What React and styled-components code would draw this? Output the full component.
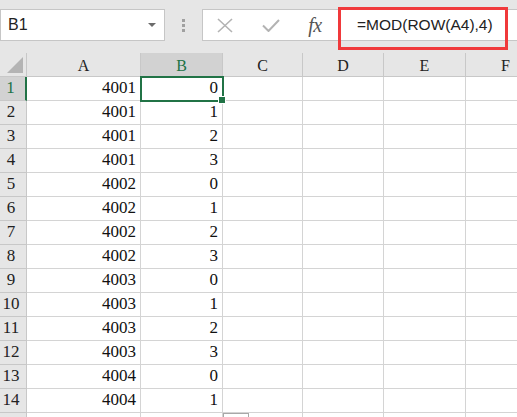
import React from 'react'
import styled, { createGlobalStyle } from 'styled-components'

const GlobalStyle = createGlobalStyle`
  html, body {
    margin: 0;
    padding: 0;
    background: #ffffff;
    overflow: hidden;
  }
  * { box-sizing: border-box; }
`

const Page = styled.div`
  width: 517px;
  height: 417px;
  overflow: hidden;
  position: relative;
  background: #ffffff;
`

const Toolbar = styled.div`
  height: 53px;
  background: #e6e6e6;
  display: flex;
  align-items: flex-start;
  padding-top: 9px;
`

const NameBox = styled.div`
  width: 165px;
  height: 32px;
  background: #fff;
  border: 1px solid #c6c6c6;
  display: flex;
  align-items: center;
  justify-content: space-between;
  padding: 0 8px 0 7px;
  font-family: "Liberation Sans", Arial, sans-serif;
  font-size: 16px;
  color: #222;
`

const Caret = styled.span`
  width: 0;
  height: 0;
  border-left: 4px solid transparent;
  border-right: 4px solid transparent;
  border-top: 4px solid #6b6b6b;
`

const Grip = styled.div`
  width: 37px;
  height: 32px;
  display: flex;
  flex-direction: column;
  align-items: center;
  justify-content: center;
  gap: 2px;
  span {
    width: 3px;
    height: 3px;
    background: #a0a0a0;
  }
`

const FormulaBox = styled.div`
  flex: 1;
  height: 32px;
  background: #fff;
  border: 1px solid #c6c6c6;
  border-right: none;
  display: flex;
  align-items: center;
  padding-left: 14px;
  position: relative;
`

const IconSlot = styled.div`
  width: ${p => p.$w}px;
  margin-right: ${p => p.$gap}px;
  display: flex;
  align-items: center;
  justify-content: center;
`

const Fx = styled.span`
  font-family: "Liberation Serif", "Times New Roman", serif;
  font-style: italic;
  font-size: 20px;
  color: #555;
  letter-spacing: -0.5px;
`

const FormulaInput = styled.div`
  flex: 1;
  height: 30px;
  border-left: 1px solid #d4d4d4;
  display: flex;
  align-items: center;
  padding-left: 16px;
  font-family: "Liberation Sans", Arial, sans-serif;
  font-size: 15.5px;
  color: #222;
`

const Highlight = styled.div`
  position: absolute;
  left: 135px;
  top: -3px;
  width: 170px;
  height: 43px;
  border: 3px solid #f0393b;
  pointer-events: none;
`

const Sheet = styled.div`
  display: grid;
  grid-template-columns: 27px 114px 82px 80px 81px 82px 80px;
  grid-auto-rows: 24px;
`

const Corner = styled.div`
  background: #e6e6e6;
  border-right: 1px solid #c8c8c8;
  border-bottom: 1px solid #c8c8c8;
  position: relative;
  &::after {
    content: '';
    position: absolute;
    right: 3px;
    bottom: 3px;
    width: 0;
    height: 0;
    border-left: 16px solid transparent;
    border-bottom: 16px solid #b4b4b4;
  }
`

const ColHead = styled.div`
  background: ${p => (p.$active ? '#d2d2d2' : '#e6e6e6')};
  color: ${p => (p.$active ? '#217346' : '#222')};
  border-right: 1px solid #c8c8c8;
  border-bottom: 1px solid #c8c8c8;
  display: flex;
  align-items: center;
  justify-content: center;
  padding-top: 3px;
  font-family: "Liberation Serif", "Times New Roman", serif;
  font-size: 16px;
`

const RowHead = styled.div`
  background: ${p => (p.$active ? '#d2d2d2' : '#e6e6e6')};
  color: ${p => (p.$active ? '#217346' : '#222')};
  border-bottom: 1px solid #c8c8c8;
  border-right: ${p => (p.$active ? '2px solid #217346' : '1px solid #c8c8c8')};
  display: flex;
  align-items: flex-end;
  justify-content: center;
  padding: 0 4px 2px 0;
  font-family: "Liberation Serif", "Times New Roman", serif;
  font-size: 17px;
`

const Cell = styled.div`
  border-right: 1px solid #d4d4d4;
  border-bottom: 1px solid #d4d4d4;
  display: flex;
  align-items: flex-end;
  justify-content: flex-end;
  padding: 0 4px 2px 0;
  font-family: "Liberation Serif", "Times New Roman", serif;
  font-size: 17px;
  color: #111;
  position: relative;
  ${p => p.$selected && `
    outline: 2px solid #217346;
    outline-offset: -1px;
    z-index: 2;
    &::after {
      content: '';
      position: absolute;
      right: -4px;
      bottom: -4px;
      width: 6px;
      height: 6px;
      background: #217346;
      border: 1px solid #fff;
    }
  `}
`

const PasteTag = styled.div`
  position: absolute;
  left: 223px;
  top: 413px;
  width: 26px;
  height: 12px;
  border: 1px solid #a8a8a8;
  background: #fff;
`

const letters = ['A', 'B', 'C', 'D', 'E', 'F']
const aValues = [4001, 4001, 4001, 4001, 4002, 4002, 4002, 4002, 4003, 4003, 4003, 4003, 4004, 4004]

const App = () => {
  return (
    <Page>
      <GlobalStyle />
      <Toolbar>
        <NameBox>
          <span>B1</span>
          <Caret />
        </NameBox>
        <Grip>
          <span /><span /><span />
        </Grip>
        <FormulaBox>
          <IconSlot $w={16} $gap={29}>
            <svg width="16" height="15" viewBox="0 0 16 15">
              <path d="M1 1 L15 14 M15 1 L1 14" stroke="#b3b3b3" strokeWidth="1.6" fill="none" />
            </svg>
          </IconSlot>
          <IconSlot $w={18} $gap={27}>
            <svg width="18" height="13" viewBox="0 0 18 13">
              <path d="M1 6.5 L6.5 12 L17 1" stroke="#b3b3b3" strokeWidth="2" fill="none" />
            </svg>
          </IconSlot>
          <IconSlot $w={16} $gap={17}>
            <Fx>fx</Fx>
          </IconSlot>
          <FormulaInput>=MOD(ROW(A4),4)</FormulaInput>
          <Highlight />
        </FormulaBox>
      </Toolbar>

      <Sheet>
        <Corner />
        {letters.map(l => (
          <ColHead key={l} $active={l === 'B'}>{l}</ColHead>
        ))}
        {aValues.map((a, i) => (
          <React.Fragment key={i}>
            <RowHead $active={i === 0}>{i + 1}</RowHead>
            <Cell>{a}</Cell>
            <Cell $selected={i === 0}>{i % 4}</Cell>
            <Cell />
            <Cell />
            <Cell />
            <Cell />
          </React.Fragment>
        ))}
        <RowHead />
        <Cell /><Cell /><Cell /><Cell /><Cell /><Cell />
      </Sheet>
      <PasteTag />
    </Page>
  )
}

export default App
